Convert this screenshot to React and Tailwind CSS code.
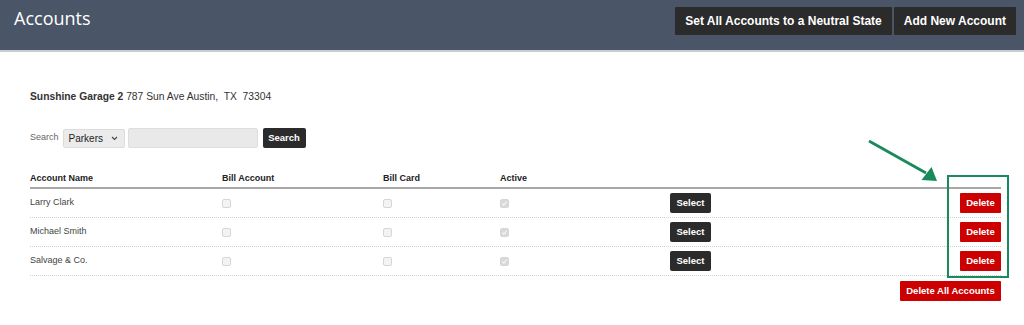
import React from "react";

function Box({ checked }) {
  return (
    <div className="w-[9px] h-[9px] rounded-[2px] border border-[#d6d6d6] bg-[#f3f3f3] flex items-center justify-center">
      {checked && (
        <svg width="7" height="7" viewBox="0 0 8 8">
          <rect x="0" y="0" width="8" height="8" fill="#d9d9d9" />
          <path d="M1.5 4.2 L3.2 5.8 L6.5 2" stroke="#f7f7f7" strokeWidth="1.3" fill="none" />
        </svg>
      )}
    </div>
  );
}

const rows = ["Larry Clark", "Michael Smith", "Salvage & Co."];

export default function App() {
  return (
    <div className="relative w-[1024px] h-[325px] bg-white overflow-hidden" style={{ fontFamily: '"Liberation Sans", Arial, sans-serif' }}>
      {/* Header */}
      <div className="h-[52px] bg-[#4a5568] border-b-2 border-[#c9ccd2] flex items-start justify-between pt-[7px] pl-[14px] pr-[8px]">
        <div className="text-white text-[18px] leading-[24px] -mt-[1px]" style={{ fontFamily: '"Open Sans", sans-serif' }}>Accounts</div>
        <div className="flex gap-[2px]">
          <div className="h-[28px] px-[10px] bg-[#2b2b2b] text-white font-bold text-[12px] flex items-center rounded-[1px]">Set All Accounts to a Neutral State</div>
          <div className="h-[28px] px-[10px] bg-[#2b2b2b] text-white font-bold text-[12px] flex items-center rounded-[1px]">Add New Account</div>
        </div>
      </div>

      <div className="pl-[30px] pr-[23px]">
        <div className="mt-[38px] text-[10.3px] leading-[14px] text-[#333]">
          <span className="font-bold">Sunshine Garage 2</span> 787 Sun Ave Austin,&nbsp; TX&nbsp; 73304
        </div>

        <div className="mt-[24px] h-[20px] flex items-center">
          <span className="text-[9px] text-[#666] mr-[4px]">Search</span>
          <div className="w-[62px] h-[19px] bg-[#ebebeb] border border-[#dcdcdc] rounded-[2px] flex items-center justify-between pl-[5px] pr-[6px] text-[10px] text-[#222]">
            <span>Parkers</span>
            <svg width="7" height="5" viewBox="0 0 7 5"><path d="M1 1 L3.5 3.5 L6 1" stroke="#444" strokeWidth="1.1" fill="none" /></svg>
          </div>
          <div className="ml-[3px] w-[130px] h-[20px] bg-[#e9e9e9] border border-[#dedede] rounded-[2px]" />
          <div className="ml-[5px] w-[43px] h-[20px] bg-[#2b2b2b] rounded-[2px] text-white font-bold text-[9.5px] flex items-center justify-center">Search</div>
        </div>

        {/* Table */}
        <div className="mt-[22px]">
          <div className="h-[19px] grid grid-cols-[192px_161px_117px_170px_41px_1fr] items-center border-b-2 border-[#a8a8a8] text-[9px] font-bold text-[#222]">
            <div>Account Name</div>
            <div>Bill Account</div>
            <div>Bill Card</div>
            <div>Active</div>
            <div />
            <div />
          </div>
          {rows.map((r) => (
            <div key={r} className="h-[29px] grid grid-cols-[192px_161px_117px_170px_41px_1fr] items-center border-b border-dotted border-[#cfcfcf] text-[9px] text-[#444]">
              <div>{r}</div>
              <div><Box /></div>
              <div><Box /></div>
              <div><Box checked /></div>
              <div className="h-[20px] bg-[#2b2b2b] rounded-[2px] text-white font-bold text-[9.5px] flex items-center justify-center">Select</div>
              <div className="flex justify-end">
                <div className="w-[41px] h-[20px] bg-[#cc0000] rounded-[1px] text-white font-bold text-[9.5px] flex items-center justify-center">Delete</div>
              </div>
            </div>
          ))}
          <div className="mt-[5px] flex justify-end">
            <div className="w-[101px] h-[20px] bg-[#cc0000] rounded-[1px] text-white font-bold text-[9.5px] flex items-center justify-center">Delete All Accounts</div>
          </div>
        </div>
      </div>

      {/* Annotation overlay */}
      <div className="absolute left-[947px] top-[175px] w-[62px] h-[103px] border-[2.5px] border-[#188a5c]" />
      <svg className="absolute left-0 top-0" width="1024" height="325" viewBox="0 0 1024 325">
        <line x1="869" y1="141" x2="926" y2="173" stroke="#188a5c" strokeWidth="2.8" />
        <polygon points="937,181 921.5,180 931.5,167" fill="#188a5c" />
      </svg>
    </div>
  );
}
